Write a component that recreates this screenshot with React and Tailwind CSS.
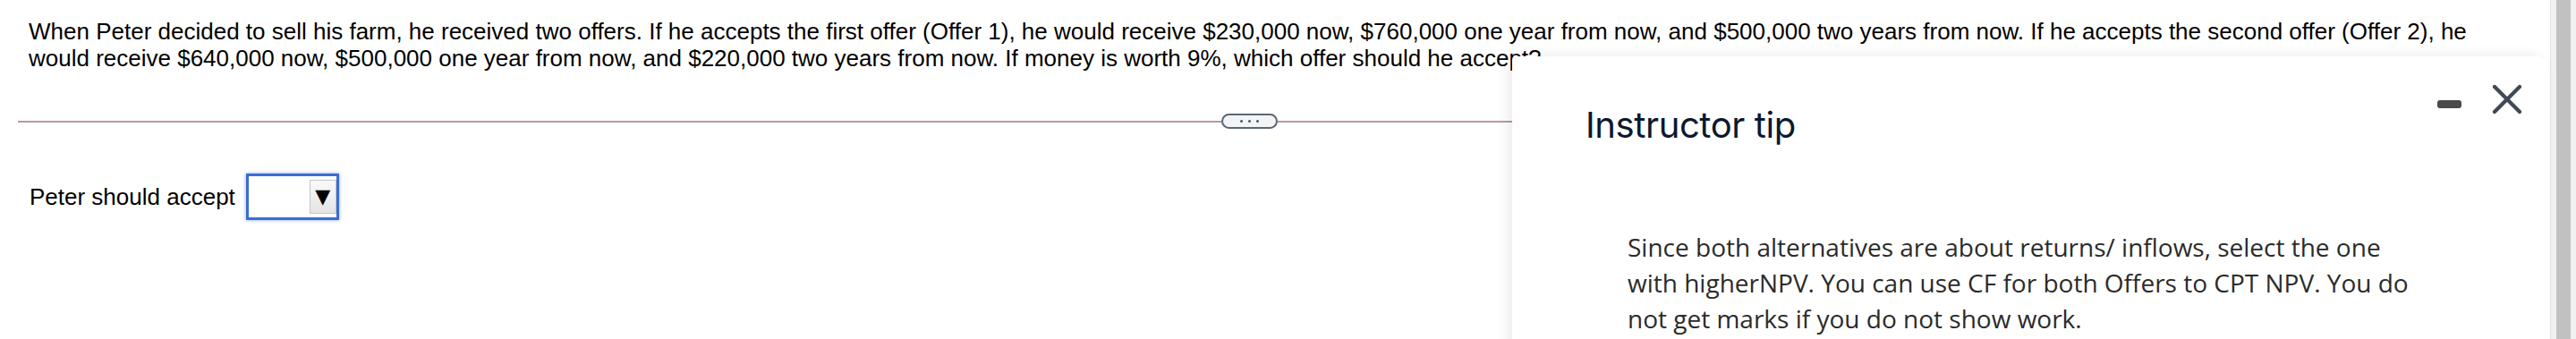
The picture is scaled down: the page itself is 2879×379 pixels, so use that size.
import { X } from 'lucide-react';

const QUESTION =
  'When Peter decided to sell his farm, he received two offers. If he accepts the first offer (Offer 1), he would receive $230,000 now, $760,000 one year from now, and $500,000 two years from now. If he accepts the second offer (Offer 2), he would receive $640,000 now, $500,000 one year from now, and $220,000 two years from now. If money is worth 9%, which offer should he accept?';

const TIP =
  'Since both alternatives are about returns/ inflows, select the one with higherNPV. You can use CF for both Offers to CPT NPV. You do not get marks if you do not show work.';

const App = () => {
  return (
    <div className="flex w-[2879px] h-[379px] overflow-hidden bg-white">
      <div className="relative flex-1 h-full">
        {/* Question */}
        <div className="pl-[32px] pt-[20px] w-[2800px]">
          <p className="text-[26px] leading-[30px] text-black font-['Liberation_Sans',Arial,sans-serif]">{QUESTION}</p>
        </div>

        {/* Separator */}
        <div className="ml-[20px] mt-[47px] w-[2752px] flex items-center">
          <div className="flex-1 h-[2px] bg-[#b59aa4]" />
          <div className="w-[63px] h-[17px] rounded-full border-2 border-[#5b6674] bg-[#f3f4f6] flex items-center justify-center gap-[6px]">
            <span className="w-[3px] h-[3px] rounded-full bg-[#4b5563]" />
            <span className="w-[3px] h-[3px] rounded-full bg-[#4b5563]" />
            <span className="w-[3px] h-[3px] rounded-full bg-[#4b5563]" />
          </div>
          <div className="flex-1 h-[2px] bg-[#b59aa4]" />
        </div>

        {/* Answer */}
        <div className="pl-[33px] mt-[50px] flex items-center gap-[12px]">
          <span className="text-[26px] leading-[30px] text-black font-['Liberation_Sans',Arial,sans-serif]">Peter should accept</span>
          <div className="w-[104px] h-[52px] border-[3px] border-[#3b6dd1] shadow-[0_0_4px_rgba(59,109,209,0.6)] bg-white flex items-center justify-end">
            <div className="w-[30px] h-[38px] border border-[#c6c6c6] bg-gradient-to-b from-[#fafafa] to-[#e4e4e4] flex items-center justify-center text-[22px] leading-none text-black font-['DejaVu_Sans',sans-serif]">
              ▼
            </div>
          </div>
        </div>

        {/* Instructor tip panel */}
        <div className="absolute left-[1690px] top-[63px] w-[1159px] h-[340px] bg-white rounded-tr-[16px] rounded-tl-[4px] shadow-[-6px_-2px_14px_rgba(0,0,0,0.07)]">
          <div className="flex items-start justify-between pl-[82px] pr-[19px]">
            <h2 className="mt-[53px] text-[40px] leading-[48px] text-[#0c1830] font-['Inter',sans-serif] tracking-[-0.4px]">Instructor tip</h2>
            <div className="mt-[20px] flex items-start gap-[23px]">
              <div className="mt-[29px] w-[27px] h-[9px] rounded-[3px] bg-[#4a4a4a]" />
              <X className="w-[56px] h-[56px] text-[#3e4856]" strokeWidth={1.8} />
            </div>
          </div>
          <p className="ml-[129px] mt-[92px] w-[880px] text-[28px] leading-[40px] text-[#2b2b2b] font-['Open_Sans',sans-serif]">{TIP}</p>
        </div>
      </div>

      {/* Scrollbar */}
      <div className="w-[29px] h-full bg-[#f1f1f1] border-l border-[#e3e3e3] flex justify-center">
        <div className="w-[16px] h-full bg-[#c1c1c1]" />
      </div>
    </div>
  );
};

export default App;
